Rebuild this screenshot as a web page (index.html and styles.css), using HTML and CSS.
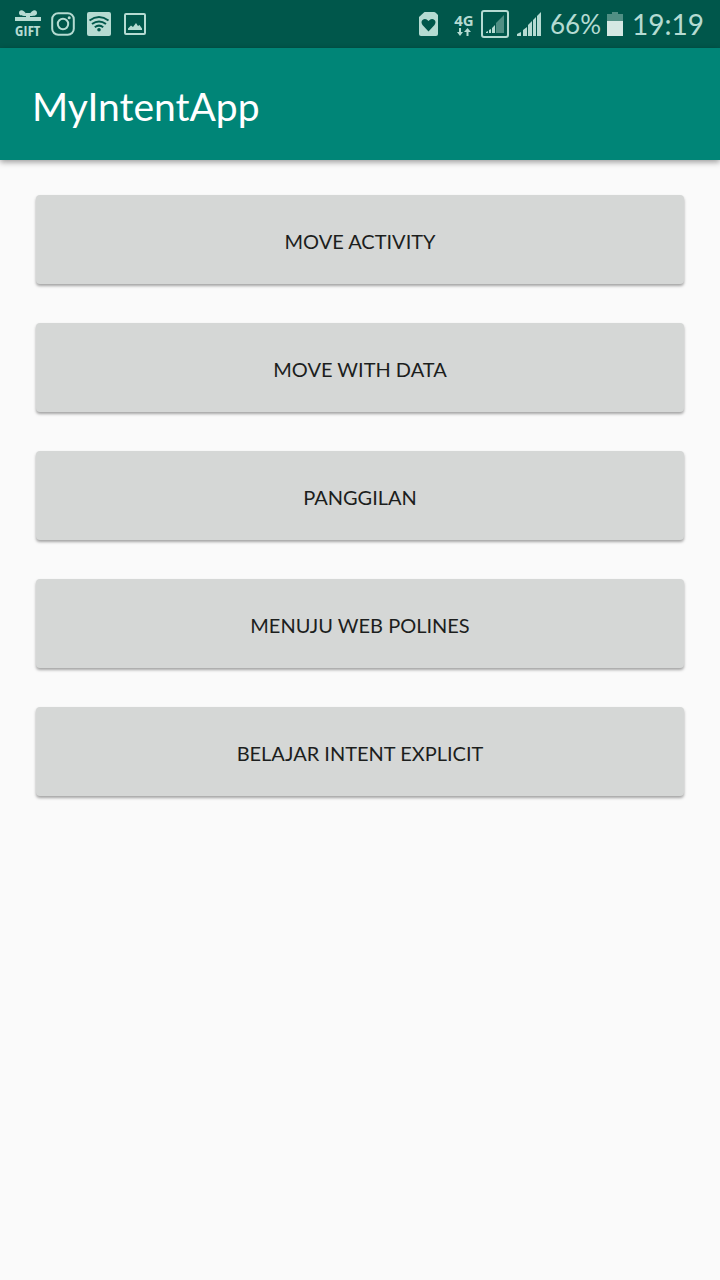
FILE: index.html
```html
<!DOCTYPE html>
<html lang="id">
<head>
<meta charset="utf-8">
<meta name="viewport" content="width=device-width, initial-scale=1">
<title>MyIntentApp</title>
<link rel="stylesheet" href="styles.css">
</head>
<body>
<div class="status-bar">
  <div class="notifications">
    <div class="gift">
      <svg class="gift-bow" viewBox="0 0 26 12" aria-hidden="true">
        <path d="M12 6C8 6 4 6 4 3C4-1 9-1 12 5ZM14 6C18 6 22 6 22 3C22-1 17-1 14 5Z"/>
        <path d="M11 3h4v4h-4zM0 7h26v4H0z"/>
      </svg>
      <span class="gift-label">GIFT</span>
    </div>
    <svg class="icon" viewBox="0 0 24 24" aria-hidden="true">
      <rect class="line" x="1.200" y="1.200" width="21.600" height="21.600" rx="6"/>
      <circle class="line" cx="12" cy="12" r="5.200"/>
      <circle cx="18.200" cy="5.800" r="1.500"/>
    </svg>
    <svg class="icon" viewBox="0 0 24 24" aria-hidden="true">
      <rect width="24" height="24" rx="2"/>
      <g class="cut-line">
        <path d="M2.500 8.500Q12 1.500 21.500 8.500"/>
        <path d="M5 12Q12 6.800 19 12"/>
        <path d="M7.800 15.200Q12 12 16.200 15.200"/>
      </g>
      <circle class="cut" cx="12" cy="17.700" r="1.800"/>
    </svg>
    <svg class="icon" viewBox="0 0 24 24" aria-hidden="true">
      <rect class="line" x="2" y="2" width="20" height="20" rx="1"/>
      <path d="M5 18v-1.500l3-3 2 1.500 3-4 2 3 1.500-1L19 16.500V18z"/>
    </svg>
  </div>
  <div class="system">
    <svg class="sim" viewBox="0 0 20 24" aria-hidden="true">
      <path d="M5.500 0H15Q16 0 17 1l2 2V22q0 2-2 2H2q-2 0-2-2V5z"/>
      <path class="cut" d="M9.500 19.500L3.500 13Q1.500 10 3.500 8Q6.500 5.500 9.500 9Q12.500 5.500 15.500 8Q17.500 10 15.500 13Z"/>
    </svg>
    <div class="network">
      <span class="network-label">4G</span>
      <svg class="arrows" viewBox="0 0 14 8" aria-hidden="true">
        <path d="M2 0h2v4h2L3 8 0 4h2zM9.500 8V4H7l3.500-4L14 4h-2.500v4z"/>
      </svg>
    </div>
    <svg class="signal-box" viewBox="0 0 28 28" aria-hidden="true">
      <rect class="line" x="1" y="1" width="26" height="26" rx="2"/>
      <path d="M5 23v-1l2-1v2zM8 23v-3l2-1v4zM11 23v-5l3-3v8z"/>
      <path class="dim" d="M15 23V13l8-8v18z"/>
    </svg>
    <svg class="signal" viewBox="0 0 24 24" aria-hidden="true">
      <path d="M0 24v-2l4-2v4zM6 24v-6l4-3v9zM11 24V13l4-4v15zM16 24V8l3-3v19zM20 24V4l4-4v24z"/>
    </svg>
    <span class="status-text percent">66%</span>
    <svg class="battery" viewBox="0 0 16 24" aria-hidden="true">
      <path class="dim" d="M0 2h5V0h6v2h5v8H0z"/>
      <path class="charge" d="M0 9h16v15H0z"/>
    </svg>
    <time class="status-text">19:19</time>
  </div>
</div>
<header class="app-bar">
  <h1 class="title">MyIntentApp</h1>
</header>
<main class="actions">
  <button class="action" type="button">MOVE ACTIVITY</button>
  <button class="action" type="button">MOVE WITH DATA</button>
  <button class="action" type="button">PANGGILAN</button>
  <button class="action" type="button">MENUJU WEB POLINES</button>
  <button class="action" type="button">BELAJAR INTENT EXPLICIT</button>
</main>
</body>
</html>
```

FILE: styles.css
```css
* {
  box-sizing: border-box;
}

body {
  margin: 0;
  min-height: 100vh;
  background: #fafafa;
  color: #1c1e1d;
  font-family: Lato, "Open Sans", sans-serif;
}

svg {
  display: block;
  flex: none;
  fill: #b5dbd2;
}

.line {
  fill: none;
  stroke: #b5dbd2;
  stroke-width: 2;
}

.cut {
  fill: #00574b;
}

.cut-line {
  fill: none;
  stroke: #00574b;
  stroke-width: 2;
}

.dim {
  fill: #508f84;
}

.charge {
  fill: #d5e8e3;
}

.status-bar {
  display: flex;
  align-items: center;
  justify-content: space-between;
  height: 48px;
  padding: 0 16px 0 15px;
  background: #00574b;
  color: #b5dbd2;
}

.notifications,
.system {
  display: flex;
  align-items: center;
}

.notifications {
  gap: 12px;
}

.gift {
  width: 24px;
}

.gift-bow {
  width: 26px;
  height: 12px;
}

.gift-label {
  display: block;
  font: bold 15px/17px "Liberation Sans Narrow", "Open Sans Condensed", "Roboto Condensed", Roboto, sans-serif;
}

.icon {
  width: 24px;
  height: 24px;
}

.sim {
  width: 20px;
  height: 24px;
  margin-right: 15px;
}

.network {
  display: flex;
  flex-direction: column;
  align-items: center;
  width: 20px;
  margin-right: 7px;
}

.network-label {
  font: bold 15px/16px "Open Sans", sans-serif;
}

.arrows {
  width: 14px;
  height: 8px;
}

.signal-box {
  width: 28px;
  height: 28px;
  margin-right: 8px;
}

.signal {
  width: 24px;
  height: 24px;
  margin-right: 9px;
}

.battery {
  width: 16px;
  height: 24px;
  margin: 0 9px 0 6px;
}

.status-text {
  font-size: 28px;
  line-height: 32px;
}

.percent {
  font-size: 26px;
}

.app-bar {
  display: flex;
  align-items: center;
  height: 112px;
  padding: 4px 32px 0;
  background: #008577;
  color: #fff;
  box-shadow: 0 2px 6px rgba(0, 0, 0, 0.4);
}

.title {
  margin: 0;
  font-size: 39px;
  font-weight: 400;
  line-height: 48px;
}

.actions {
  display: flex;
  flex-direction: column;
  gap: 39px;
  padding: 35px 36px;
}

.action {
  width: 100%;
  min-height: 89px;
  padding: 2px 16px 0;
  border: 0;
  border-radius: 4px;
  background: #d5d7d6;
  box-shadow: 0 2px 3px rgba(0, 0, 0, 0.35);
  color: inherit;
  font: inherit;
  font-size: 20px;
  line-height: 28px;
}
```
